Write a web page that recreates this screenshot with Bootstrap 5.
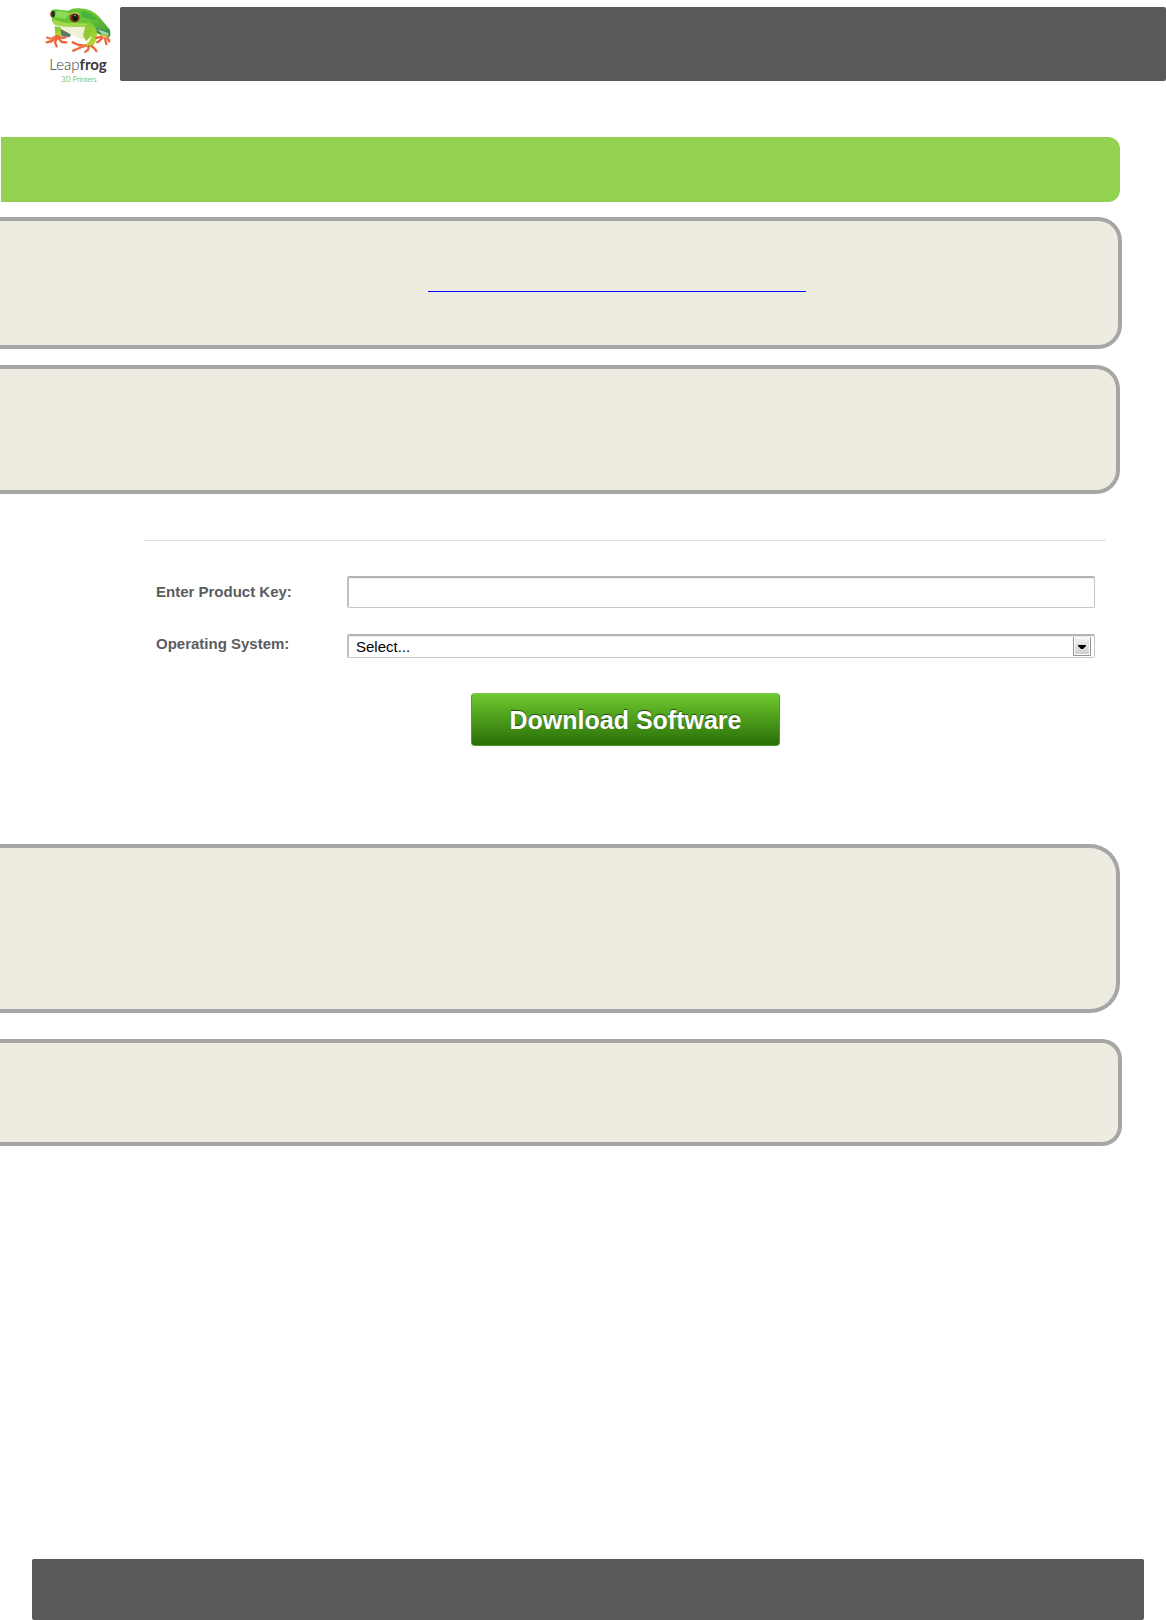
<!DOCTYPE html>
<html lang="en">
<head>
<meta charset="utf-8">
<meta name="viewport" content="width=device-width, initial-scale=1">
<title>Leapfrog 3D Printers</title>
<link rel="stylesheet" href="https://cdn.jsdelivr.net/npm/bootstrap@5.3.0/dist/css/bootstrap.min.css">
<style>
body { font-family: "Liberation Sans", Arial, sans-serif; background: #fff; }
.top-bar { height: 74px; margin-top: 7px; background: #595959; border-radius: 2px; }
.logo { width: 120px; height: 90px; }
.logo text { font-family: Lato, sans-serif; }
.title-band { height: 65px; margin: 47px 46px 0 1px; background: #92d250; border-radius: 0 12px 12px 0; }
.panel { background: #eeebe0; border: 4px solid #a6a6a6; border-left: 0; margin-right: 46px; border-radius: 0 24px 24px 0; }
.panel-wide { margin-right: 44px; }
.panel-intro { height: 132px; margin-top: 15px; }
.panel-step { height: 129px; margin-top: 16px; }
.panel-tall { height: 169px; margin-top: 98px; border-radius: 0 30px 30px 0; }
.panel-last { height: 107px; margin-top: 26px; border-radius: 0 20px 20px 0; }
.url-line { width: 378px; height: 21px; margin-top: 50px; margin-left: 428px; border-bottom: 1px solid #00f; }
.key-form { margin: 46px 60px 0 144px; border-top: 1px solid #e0e0e0; padding: 35px 11px 0 12px; }
.os-row { margin-top: 26px; }
.key-label { width: 191px; font-size: 15px; line-height: 20px; font-weight: 700; color: #5c5c5f; }
.key-field { height: 32px; border: 1px solid #c6c6c6; border-top: 2px solid #b4b4b4; border-left: 2px solid #c0c0c0; border-radius: 2px; background: #fff; box-shadow: inset 0 1px 1px #eee; }
.os-field { height: 24px; padding: 0 30px 0 7px; font-size: 15px; line-height: 20px; color: #000; appearance: none;
  background: #fff url("data:image/svg+xml,%3Csvg xmlns='http://www.w3.org/2000/svg' width='18' height='20'%3E%3Cdefs%3E%3ClinearGradient id='g' x2='0' y2='1'%3E%3Cstop stop-color='%23f2f2f2'/%3E%3Cstop offset='1' stop-color='%23cfcfcf'/%3E%3C/linearGradient%3E%3C/defs%3E%3Cpath d='M.5.5h17v19H.5z' fill='%23fff' stroke='%23929292'/%3E%3Cpath d='M2 2h14v16H2z' fill='url(%23g)'/%3E%3Cpath d='M5 9h8v1l-3 3H8l-3-3z'/%3E%3C/svg%3E") no-repeat right 3px top 0; }
.btn-download { height: 53px; width: 309px; margin: 35px 0 0 315px; border: 1px solid #4f9a28; border-top-color: #7cca48; border-radius: 4px; padding: 0; font-size: 25px; font-weight: 700; line-height: 50px; color: #fff; background: linear-gradient(#6ec92f, #2a6e07); text-shadow: 0 -1px 1px #224b18; }
.btn-download:hover { color: #fff; background: linear-gradient(#74d033, #2f780a); }
.bottom-bar { height: 61px; margin: 0 22px 0 32px; background: #595959; border-radius: 2px; }
</style>
</head>
<body class="d-flex flex-column min-vh-100">
<header class="d-flex">
  <svg class="logo flex-shrink-0" viewBox="0 0 360 270" role="img" aria-label="Leapfrog 3D Printers">
    <defs>
      <linearGradient id="skin" x1="0" y1="0" x2="1" y2="1"><stop offset="0" stop-color="#5cc436"/><stop offset=".5" stop-color="#6cc436"/><stop offset="1" stop-color="#3fa23c"/></linearGradient>
      <linearGradient id="limb" x1="0" y1="0" x2="0" y2="1"><stop offset="0" stop-color="#79c832"/><stop offset="1" stop-color="#c3d936"/></linearGradient>
    </defs>
    <g transform="translate(90 0)">
      <path d="M196 78Q222 80 240 90Q243 103 239 111L222 109L192 96Z" fill="#3d8f4a"/>
      <path d="M200 86L234 99L237 106L216 101Z" fill="#a2d8b7"/>
      <path d="M85 80L123 103L119 112L94 109Z" fill="#5a7a6c"/>
      <path d="M70 72Q106 82 158 79L176 97L159 119Q119 103 77 79Z" fill="#f0f0d7"/>
      <path d="M74 79L92 82L94 107L81 113L76 108Z" fill="url(#limb)"/>
      <path d="M65 31Q74 25 88 29L115 32Q128 23 148 25Q186 26 208 51Q225 71 241 91L221 89L200 84L188 99L170 81Q139 78 99 79Q68 76 66 61Z" fill="url(#skin)"/>
      <path d="M68 56Q90 68 123 69L169 70L178 79Q112 84 75 74Q67 70 68 56Z" fill="#a2d84b"/>
      <path d="M80 33Q106 34 120 40L105 56L74 52Z" fill="#8edb58"/>
      <path d="M155 33Q186 36 203 60L187 59L155 52Z" fill="#48b23d"/>
      <path d="M172 63Q191 71 200 91Q205 116 190 137L173 143L159 137Q181 128 184 108L170 88Z" fill="url(#limb)"/>
      <path d="M166 75L184 83L184 107L169 124L159 108Z" fill="#91ca34"/>
      <path d="M213 103L234 109" stroke="#b4ca35" stroke-width="6"/>
      <ellipse cx="69" cy="42" rx="6" ry="10" fill="#20311b"/>
      <path d="M64 35Q58 43 65 52" fill="none" stroke="#913820" stroke-width="3"/>
      <ellipse cx="134" cy="53" rx="15" ry="14" fill="#82381d"/>
      <ellipse cx="135" cy="53" rx="8" ry="10" fill="#14150f"/>
      <path d="M120 43Q134 33 149 44" fill="none" stroke="#adc546" stroke-width="4"/>
      <circle cx="135" cy="47" r="2" fill="#fff"/>
      <g fill="none" stroke="#ea6638" stroke-width="7" stroke-linecap="round" stroke-linejoin="round">
        <path d="M79 108L65 117L52 113M77 112L66 123L50 127M81 114L75 127L80 139M84 113L95 126L109 127M81 108L96 114L107 112"/>
        <path d="M165 137L146 135L128 127M167 137L148 144L130 152M176 138L175 148L166 156M184 138L193 145L199 153"/>
        <path d="M215 110L199 114M218 113L208 123L202 127M225 115L229 132M232 113L238 124"/>
      </g>
      <path d="M54 112L66 119L77 112M133 149L151 139L166 139" fill="none" stroke="#ff9b57" stroke-width="2"/>
      <text x="58" y="210" font-size="45" font-weight="300" fill="#3a3a3a">Leap<tspan font-weight="700">frog</tspan></text>
      <text x="94" y="246" font-size="21" fill="#82c765">3D Printers</text>
    </g>
  </svg>
  <div class="top-bar flex-grow-1"></div>
</header>
<main>
  <div class="title-band"></div>
  <section class="panel panel-wide panel-intro d-flex align-items-start"><a class="url-line d-block" href="#" aria-label="Software download page"></a></section>
  <section class="panel panel-step"></section>
  <form class="key-form">
    <div class="d-flex align-items-center">
      <label class="key-label flex-shrink-0" for="key">Enter Product Key:</label>
      <input class="key-field flex-grow-1" id="key" type="text">
    </div>
    <div class="os-row d-flex align-items-start">
      <label class="key-label flex-shrink-0" for="os">Operating System:</label>
      <select class="key-field os-field flex-grow-1" id="os"><option>Select...</option></select>
    </div>
    <button class="btn btn-download d-block" type="button">Download Software</button>
  </form>
  <section class="panel panel-tall"></section>
  <section class="panel panel-wide panel-last"></section>
</main>
<footer class="bottom-bar mt-auto"></footer>
<script src="https://cdn.jsdelivr.net/npm/bootstrap@5.3.0/dist/js/bootstrap.bundle.min.js"></script>
</body>
</html>
